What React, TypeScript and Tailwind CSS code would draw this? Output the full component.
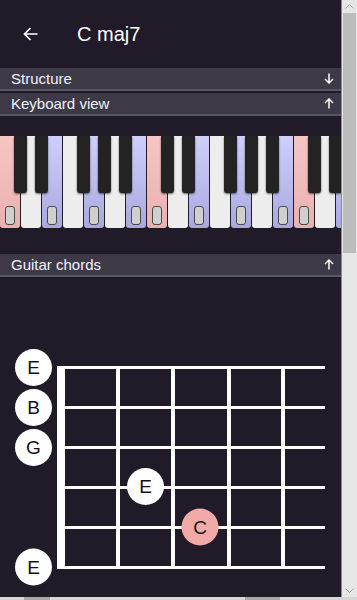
import React from "react"

const FONT = { fontFamily: '"Liberation Sans", Arial, sans-serif' }

const WHITE_KEYS = 17
const KEY_PITCH = 21

function isChordNote(i: number) {
  return [0, 2, 4, 6].includes(i % 7)
}

function keyColor(i: number) {
  const n = i % 7
  if (n === 0) return "bg-gradient-to-b from-[#f6c6c4] to-[#e9b1b0]"
  if (n === 2 || n === 4 || n === 6) return "bg-gradient-to-b from-[#cfcffb] to-[#a9a9e0]"
  return "bg-[#ededed]"
}

function hasBlackAfter(i: number) {
  return [0, 1, 3, 4, 5].includes(i % 7)
}

function Arrow({ up }: { up?: boolean }) {
  return (
    <svg width="10" height="11" viewBox="0 0 10 11" className={up ? "rotate-180" : ""}>
      <path d="M5 0.5 V10 M1 6 L5 10 L9 6" stroke="#ffffff" strokeWidth="1.5" fill="none" />
    </svg>
  )
}

function SectionBar({ title, up }: { title: string; up?: boolean }) {
  return (
    <div className="flex h-[23px] items-center justify-between border-b-2 border-[#5a5663] bg-[#3d3946] pl-[11px] pr-[7px] text-[15px] text-[#f3f1ff]">
      <span className="leading-none">{title}</span>
      <Arrow up={up} />
    </div>
  )
}

function Keyboard() {
  return (
    <div className="relative h-[92px] overflow-hidden">
      <div className="flex gap-[1px]">
        {Array.from({ length: WHITE_KEYS }).map((_, i) => (
          <div
            key={i}
            className={`relative h-[92px] w-[20px] shrink-0 rounded-b-[3px] ${keyColor(i)}`}
          >
            {isChordNote(i) && (
              <div className="absolute bottom-[3px] left-[5px] h-[19px] w-[10px] rounded-[3px] border border-[#4a4a4a] bg-[#cfcfcf]" />
            )}
          </div>
        ))}
      </div>
      {Array.from({ length: WHITE_KEYS }).map((_, i) =>
        hasBlackAfter(i) ? (
          <div
            key={"b" + i}
            className="absolute top-0 h-[57px] w-[13px] rounded-b-[3px] bg-[#232323] shadow-[0_1px_2px_rgba(0,0,0,0.6)]"
            style={{ left: KEY_PITCH * (i + 1) - 7 }}
          />
        ) : null
      )}
    </div>
  )
}

const STRINGS = [90.5, 130.5, 170.5, 210.5, 250.5, 290.5]
const FRETS = [118, 173, 229, 283]

function Note({ cx, cy, label, fill = "#ffffff" }: { cx: number; cy: number; label: string; fill?: string }) {
  return (
    <g>
      <circle cx={cx} cy={cy} r="18.5" fill={fill} />
      <text
        x={cx}
        y={cy + 6.5}
        textAnchor="middle"
        fontSize="19"
        fill="#111111"
        fontFamily='"Liberation Sans", Arial, sans-serif'
      >
        {label}
      </text>
    </g>
  )
}

function Fretboard() {
  return (
    <svg width="341" height="321" viewBox="0 0 341 321" className="block">
      {STRINGS.map((y) => (
        <rect key={y} x="57" y={y - 1.5} width="268" height="3" fill="#ffffff" />
      ))}
      <rect x="57" y={STRINGS[0] - 1.5} width="8" height={STRINGS[5] - STRINGS[0] + 3} fill="#ffffff" />
      {FRETS.map((x) => (
        <rect key={x} x={x - 2} y={STRINGS[0] - 1.5} width="4" height={STRINGS[5] - STRINGS[0] + 3} fill="#ffffff" />
      ))}
      <Note cx={33.5} cy={STRINGS[0]} label="E" />
      <Note cx={33.5} cy={STRINGS[1]} label="B" />
      <Note cx={33.5} cy={STRINGS[2]} label="G" />
      <Note cx={145.5} cy={STRINGS[3] - 1} label="E" />
      <Note cx={200} cy={STRINGS[4] - 0.5} label="C" fill="#f2aaa7" />
      <Note cx={33.5} cy={STRINGS[5] - 0.5} label="E" />
    </svg>
  )
}

function Scrollbar() {
  return (
    <div className="flex w-[16px] shrink-0 flex-col border-l border-[#8a8a8a] bg-[#e6e6e6]">
      <div className="flex h-[13px] items-center justify-center">
        <svg width="9" height="5" viewBox="0 0 9 5">
          <path d="M0.5 4.5 L4.5 0.5 L8.5 4.5" stroke="#a0a0a0" strokeWidth="1" fill="none" />
        </svg>
      </div>
      <div className="mx-[1px] h-[240px] bg-[#bcbcbc]" />
      <div className="flex-1" />
      <div className="flex h-[13px] items-center justify-center">
        <svg width="9" height="5" viewBox="0 0 9 5">
          <path d="M0.5 0.5 L4.5 4.5 L8.5 0.5" stroke="#a0a0a0" strokeWidth="1" fill="none" />
        </svg>
      </div>
    </div>
  )
}

export default function App() {
  return (
    <div className="flex h-[600px] w-[357px] flex-col overflow-hidden bg-[#201a29]" style={FONT}>
      <div className="flex min-h-0 flex-1">
        <main className="w-[341px] shrink-0 overflow-hidden">
          <header className="flex h-[68px] items-center">
            <div className="flex w-[77px] justify-center pr-[17px]">
              <svg width="15" height="14" viewBox="0 0 15 14">
                <path d="M14.5 7 H1.5 M7.5 1 L1.5 7 L7.5 13" stroke="#ffffff" strokeWidth="1.7" fill="none" />
              </svg>
            </div>
            <h1 className="text-[20px] leading-none text-white">C maj7</h1>
          </header>
          <div className="flex flex-col gap-[2px]">
            <SectionBar title="Structure" />
            <SectionBar title="Keyboard view" up />
          </div>
          <div className="mt-[20px]">
            <Keyboard />
          </div>
          <div className="mt-[26px]">
            <SectionBar title="Guitar chords" up />
          </div>
          <Fretboard />
        </main>
        <Scrollbar />
      </div>
      <div className="flex h-[3px] bg-[#d6d6d6]">
        <div className="ml-[24px] w-[26px] bg-[#a8a8a8]" />
        <div className="ml-[195px] w-[35px] bg-[#a8a8a8]" />
      </div>
    </div>
  )
}
